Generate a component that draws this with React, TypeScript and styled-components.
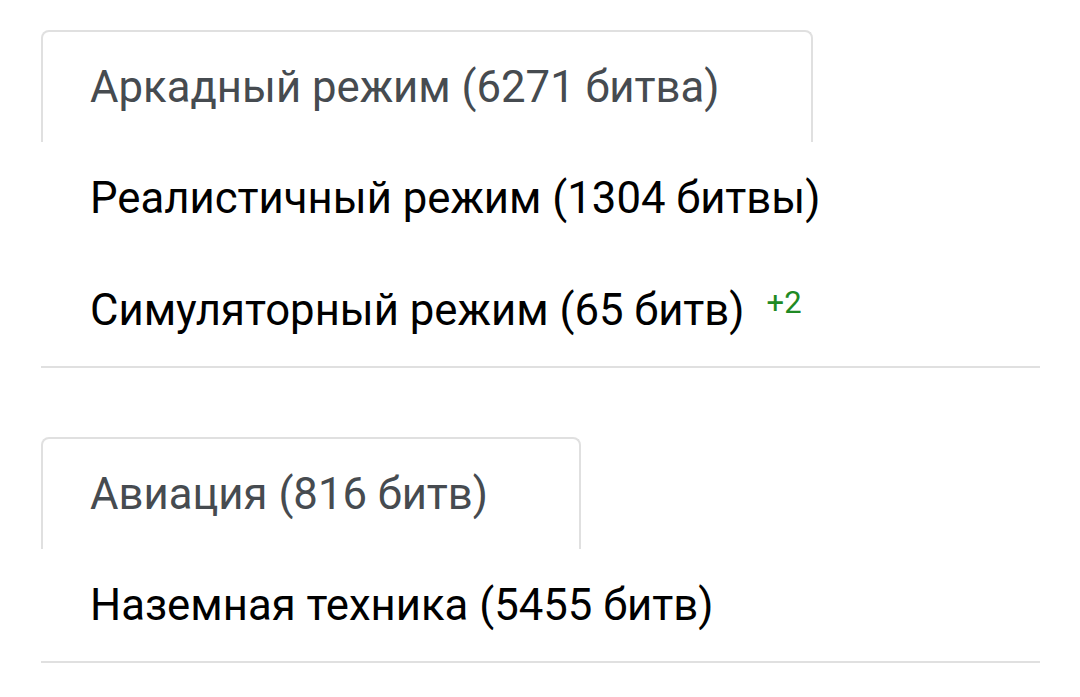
import React from 'react';
import styled, { createGlobalStyle } from 'styled-components';

const GlobalStyle = createGlobalStyle`
  body {
    margin: 0;
    background: #ffffff;
    font-family: Roboto, "Noto Sans", sans-serif;
  }
`;

type TabData = { label: string; extra?: string };

const groups: { active: number; tabs: TabData[] }[] = [
  {
    active: 0,
    tabs: [
      { label: 'Аркадный режим (6271 битва)' },
      { label: 'Реалистичный режим (1304 битвы)' },
      { label: 'Симуляторный режим (65 битв)', extra: '+2' },
    ],
  },
  {
    active: 0,
    tabs: [{ label: 'Авиация (816 битв)' }, { label: 'Наземная техника (5455 битв)' }],
  },
];

const Page = styled.div`
  padding: 30px 40px 0 41px;
  display: flex;
  flex-direction: column;
  gap: 69px;
`;

const TabList = styled.ul`
  list-style: none;
  margin: 0;
  padding: 0;
  display: flex;
  flex-wrap: wrap;
  border-bottom: 2px solid #e0e0e0;
`;

const Tab = styled.li<{ $active?: boolean }>`
  box-sizing: border-box;
  height: 112px;
  display: flex;
  align-items: center;
  padding: 0 91px 0 ${(p) => (p.$active ? 47 : 49)}px;
  font-size: 43.7px;
  white-space: nowrap;
  color: ${(p) => (p.$active ? '#464b50' : '#000000')};
  border: ${(p) => (p.$active ? '2px solid #e0e0e0' : 'none')};
  border-bottom: none;
  border-radius: 8px 8px 0 0;
  cursor: pointer;
`;

const Extra = styled.span`
  font-size: 31px;
  color: #1f8a24;
  margin-left: 22px;
  align-self: flex-start;
  margin-top: 30px;
`;

export default function App() {
  return (
    <>
      <GlobalStyle />
      <Page>
        {groups.map((g, gi) => (
          <TabList key={gi}>
            {g.tabs.map((t, ti) => (
              <Tab key={ti} $active={ti === g.active}>
                {t.label}
                {t.extra && <Extra>{t.extra}</Extra>}
              </Tab>
            ))}
          </TabList>
        ))}
      </Page>
    </>
  );
}
